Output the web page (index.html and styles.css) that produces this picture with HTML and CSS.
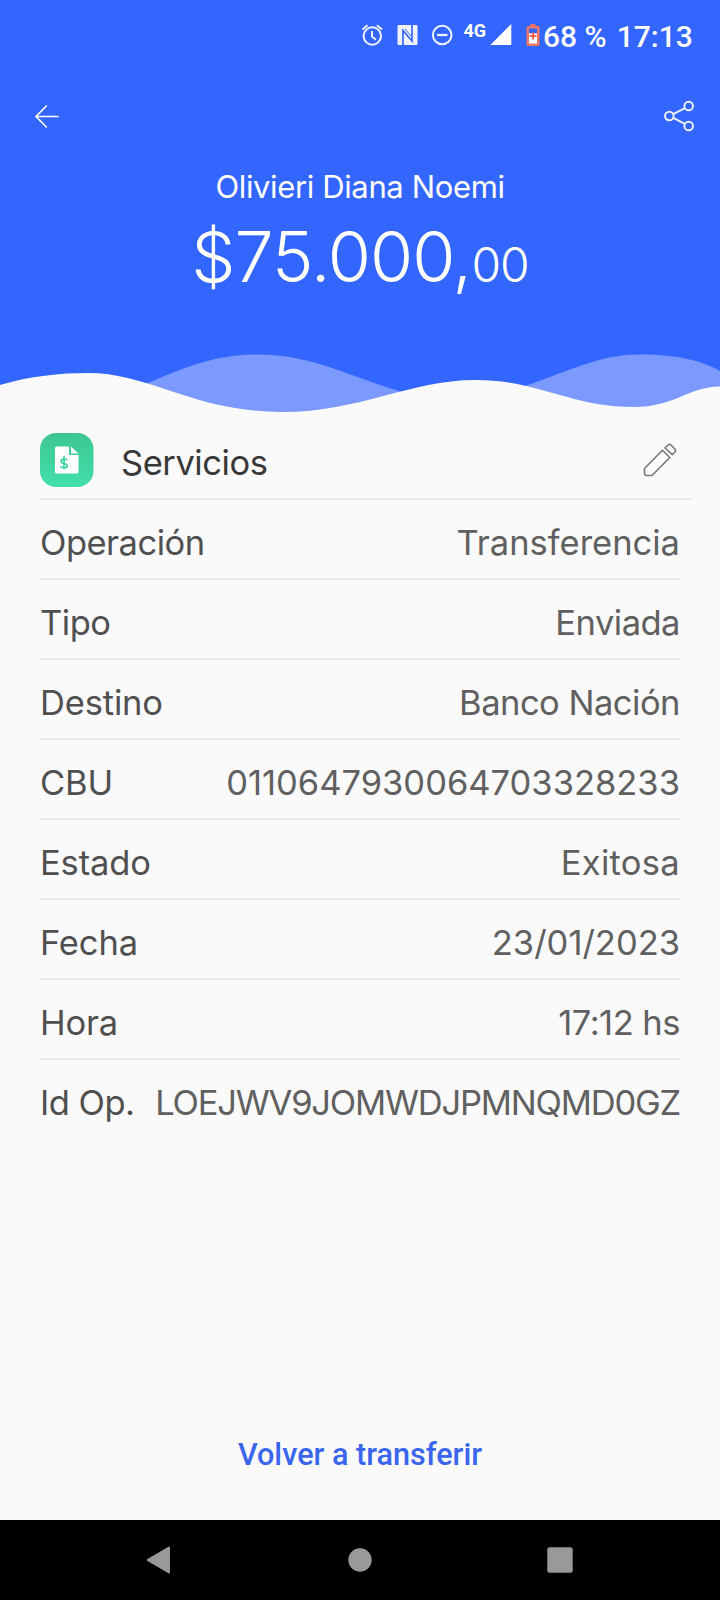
FILE: index.html
```html
<!DOCTYPE html>
<html lang="es">
<head>
    <meta charset="UTF-8">
    <meta name="viewport" content="width=device-width, initial-scale=1.0">
    <title>Transferencia</title>
    <link rel="stylesheet" href="styles.css">
</head>
<body>
    <header class="header">
        <div class="status-bar">
            <svg class="status-icons" width="166" height="30" viewBox="360 20 166 30">
                <!-- alarm -->
                <g fill="none" stroke="#eef2ff" stroke-width="2">
                    <circle cx="372.3" cy="36" r="8.7"/>
                    <path d="M372 31v5.500l4 3.200M362.500 29.500l5-4.200M382 29.500l-5-4.200"/>
                </g>
                <!-- nfc -->
                <rect x="397.500" y="25" width="20" height="20" rx="1" fill="#eef2ff"/>
                <path d="M403 45.500V30.500l9 10.500V24.500" fill="none" stroke="#3366ff" stroke-width="1.700"/>
                <path d="M405 29l6 7" stroke="#3366ff" stroke-width="1"/>
                <!-- do not disturb -->
                <circle cx="442.200" cy="35" r="9.300" fill="none" stroke="#eef2ff" stroke-width="2"/>
                <path d="M437 35h10.500" stroke="#eef2ff" stroke-width="2.200"/>
                <text class="network" x="463.500" y="37">4G</text>
                <path fill="#fff" d="M511.300 24v21h-21z"/>
            </svg>
            <svg class="battery" width="14" height="23" viewBox="0 0 14 23">
                <path fill="#ee7561" d="M4.500 0h5v2h2.500a1.500 1.500 0 0 1 1.500 1.500v17a1.500 1.500 0 0 1-1.500 1.500h-10a1.500 1.500 0 0 1-1.500-1.500v-17a1.500 1.500 0 0 1 1.500-1.500h2.500z"/>
                <path fill="#3366ff" d="M3 4.500h8v5h-8z"/>
                <path fill="#fff" d="M3 9.500h8v10h-8z"/>
                <path d="M7 8.500v7M3.500 12h7" stroke="#ee6350" stroke-width="2"/>
            </svg>
            <span class="percent">68 %</span>
            <span class="clock">17:13</span>
        </div>
        <nav class="toolbar">
            <svg width="24" height="24" viewBox="0 0 24 24" fill="none" stroke="#fff" stroke-width="1.700" stroke-linecap="round" stroke-linejoin="round">
                <path d="M11.300 2l-10.300 10.500 10.300 10.500M1 12.500h22"/>
            </svg>
            <svg width="30" height="32" viewBox="0 0 30 32" fill="none" stroke="#eef2ff" stroke-width="1.900">
                <circle cx="5.300" cy="16" r="4.300"/>
                <circle cx="24.700" cy="6" r="4.300"/>
                <circle cx="24.700" cy="26" r="4.300"/>
                <path d="M9.200 14.200l11.700-6M9.200 17.800l11.700 6"/>
            </svg>
        </nav>
        <h1 class="name">Olivieri Diana Noemi</h1>
        <p class="amount">$75.000,<span class="cents">00</span></p>
        <svg class="waves" width="720" height="80" viewBox="0 0 720 80">
            <path fill="#7b99fe" d="M140 46C180 30 210 14.500 258 14.500C315 14.500 350 38 410 54L410 80H140zM515 49C565 34 595 14.500 640 14.500C680 14.500 705 22 720 31V80H515z"/>
            <path fill="#fafafa" d="M0 45C30 36 60 33 88 33C150 33 195 72 282 72C360 72 410 40 475 40C540 40 570 67 634 67C675 67 690 46 720 46.500V80H0z"/>
        </svg>
    </header>

    <main class="detail">
        <section class="category">
            <svg width="54" height="54" viewBox="0 0 54 54">
                <defs>
                    <linearGradient id="green" x1="0" y1="0" x2="0" y2="1">
                        <stop offset="0" stop-color="#3cc690"/>
                        <stop offset="1" stop-color="#43dfab"/>
                    </linearGradient>
                </defs>
                <rect width="53.500" height="54" rx="16" fill="url(#green)"/>
                <path fill="#fff" d="M16.500 13.500h12.500v8.500h9.500v17a1.500 1.500 0 0 1-1.500 1.500h-20.500a1.500 1.500 0 0 1-1.500-1.500v-24a1.500 1.500 0 0 1 1.500-1.500zM31 13.500l7.500 7h-7.500z"/>
                <path fill="none" stroke="#3fd49f" stroke-width="1.700" d="M27 27.200c-.8-1.300-6-1.800-6 1.200 0 3 6.300 1.300 6.300 4.300 0 3-5.800 2.700-6.600.7M24 23v13"/>
            </svg>
            <h2 class="category-name">Servicios</h2>
            <svg width="34" height="34" viewBox="0 0 34 34" fill="none" stroke="#777" stroke-width="1.600" stroke-linejoin="round">
                <path d="M1.500 25.500L19.500 7.200l7.300 7.300L9 32.500H3.500a2 2 0 0 1-2-2zM22 5l3-3q1.500-1.200 3 0l4 4.200q1 1.500 0 2.800l-2.700 2.700z"/>
            </svg>
        </section>
        <dl class="rows">
            <div class="row"><dt class="tight">Operación</dt><dd>Transferencia</dd></div>
            <div class="row"><dt class="tight">Tipo</dt><dd class="tight">Enviada</dd></div>
            <div class="row"><dt>Destino</dt><dd class="tight">Banco Nación</dd></div>
            <div class="row"><dt>CBU</dt><dd>0110647930064703328233</dd></div>
            <div class="row"><dt>Estado</dt><dd class="wide">Exitosa</dd></div>
            <div class="row"><dt>Fecha</dt><dd>23/01/2023</dd></div>
            <div class="row"><dt>Hora</dt><dd class="tight">17:12 hs</dd></div>
            <div class="row"><dt class="tight">Id Op.</dt><dd class="op-id">LOEJWV9JOMWDJPMNQMD0GZ</dd></div>
        </dl>
        <a class="again">Volver a transferir</a>
    </main>

    <footer class="nav-bar">
        <svg width="28" height="28" viewBox="0 0 28 28"><path fill="#999" d="M22.500 .7q1.500-.6 1.500 1v24.600q0 1.600-1.500 1L1.500 15q-1.500-1 0-2z"/></svg>
        <svg width="28" height="28" viewBox="0 0 28 28"><circle cx="14" cy="14" r="11.700" fill="#999"/></svg>
        <svg width="28" height="28" viewBox="0 0 28 28"><rect x="1.300" y="1.300" width="25.400" height="25.400" rx="2.500" fill="#999"/></svg>
    </footer>
</body>
</html>
```
FILE: styles.css
```css
* {
    box-sizing: border-box;
    margin: 0;
    padding: 0;
}
body {
    display: flex;
    flex-direction: column;
    width: 720px;
    height: 1600px;
    font-family: Inter, "Liberation Sans", sans-serif;
    background-color: #fafafa;
}
svg {
    display: block;
    flex: none;
}
.header {
    display: flex;
    flex-direction: column;
    height: 420px;
    color: #fff;
    background-color: #3366ff;
}
.status-bar {
    display: flex;
    align-items: center;
    height: 72px;
    padding-left: 360px;
    font-family: Roboto, sans-serif;
    font-size: 30px;
    font-weight: 500;
    white-space: nowrap;
}
.status-icons {
    margin-top: -2px;
}
.network {
    fill: #fff;
    font-size: 18px;
    font-weight: 700;
}
.battery {
    margin-right: 3px;
    margin-top: -2px;
}
.clock {
    margin-left: 10px;
}
.toolbar {
    display: flex;
    align-items: center;
    justify-content: space-between;
    height: 88px;
    padding: 0 26px 0 35px;
}
.name {
    height: 54px;
    font-size: 31px;
    font-weight: 400;
    letter-spacing: -0.37px;
    line-height: 53px;
    text-align: center;
}
.amount {
    height: 86px;
    font-size: 70px;
    font-weight: 300;
    letter-spacing: -1px;
    line-height: 86px;
    text-align: center;
}
.cents {
    font-size: 48px;
}
.waves {
    margin-top: auto;
}
.detail {
    display: flex;
    flex: 1;
    flex-direction: column;
    padding: 0 40px;
}
.category {
    display: flex;
    align-items: center;
    width: 653px;
    height: 80px;
    padding-top: 2px;
    padding-right: 16px;
    border-bottom: 2px solid #ebebeb;
}
.category-name {
    flex: 1;
    margin-top: 4px;
    margin-left: 27px;
    color: #383838;
    font-size: 34.5px;
    font-weight: 400;
    letter-spacing: -0.45px;
}
.row {
    display: flex;
    align-items: center;
    justify-content: space-between;
    height: 80px;
    padding-top: 6px;
    border-bottom: 2px solid #ebebeb;
    color: #505050;
    font-size: 34.5px;
    white-space: nowrap;
}
.row:last-child {
    border-bottom-color: transparent;
}
.row dt {
    letter-spacing: -0.15px;
}
.row dd {
    color: #606060;
}
.row .tight {
    letter-spacing: -0.5px;
}
.row .wide {
    letter-spacing: 0.3px;
}
.row .op-id {
    letter-spacing: -1.2px;
}
.again {
    margin-top: auto;
    margin-bottom: 47px;
    color: #3a66ee;
    font-family: Roboto, sans-serif;
    font-size: 30.6px;
    font-weight: 500;
    line-height: 36px;
    text-align: center;
}
.nav-bar {
    display: flex;
    align-items: center;
    justify-content: space-between;
    height: 80px;
    padding: 0 146px;
    background-color: #000;
}
```
